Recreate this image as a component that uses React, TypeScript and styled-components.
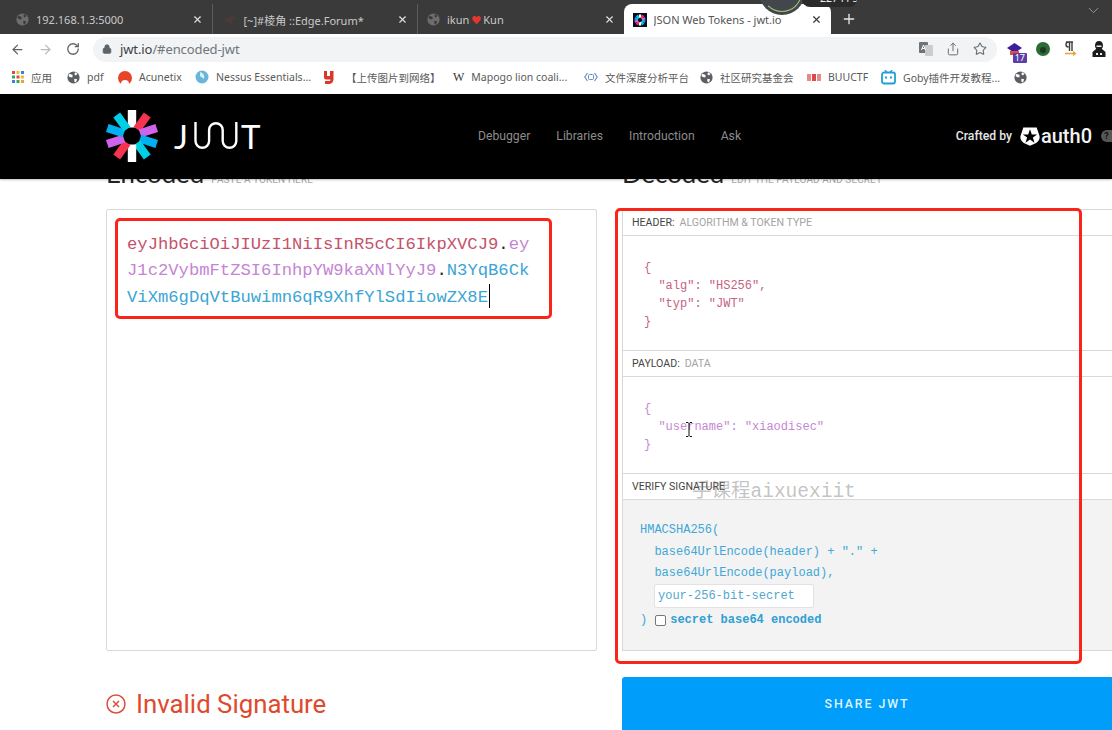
import React from 'react';
import styled, { createGlobalStyle } from 'styled-components';
import { ArrowLeft, ArrowRight, RotateCw, Lock, Star, Share, Plus, X, ChevronDown } from 'lucide-react';

const Global = createGlobalStyle`
  html, body { margin: 0; padding: 0; background: #fff; }
  #root { width: 1112px; height: 730px; }
`;

const UI = `"Noto Sans", "Noto Sans CJK SC", sans-serif`;
const MONO = `"Liberation Mono", "DejaVu Sans Mono", monospace`;
const SITE = `Roboto, "Liberation Sans", sans-serif`;

const Page = styled.div`
  position: relative;
  width: 1112px;
  height: 730px;
  overflow: hidden;
  background: #fff;
  font-family: ${SITE};
`;

/* ---------- browser chrome ---------- */
const TabStrip = styled.div`
  position: relative;
  height: 34px;
  background: #3a3a3a;
  display: flex;
  align-items: flex-end;
  padding-left: 7px;
`;
const Tab = styled.div<{ $active?: boolean; $sep?: boolean }>`
  width: ${p => (p.$active ? 207 : 205.5)}px;
  box-sizing: border-box;
  height: 30px;
  display: flex;
  align-items: center;
  gap: 7px;
  padding: 1px 9px 0;
  font: 11px ${UI};
  color: ${p => (p.$active ? '#555' : '#c9c9c9')};
  background: ${p => (p.$active ? '#fff' : 'transparent')};
  border-radius: ${p => (p.$active ? '8px 8px 0 0' : '0')};
  border-right: ${p => (p.$sep ? '1px solid #5c5c5c' : '0')};
  background-clip: padding-box;
  svg { flex: none; }
`;
const TabTitle = styled.span`
  flex: 1;
  white-space: nowrap;
  overflow: hidden;
`;
const Heart = styled.span`
  color: #e5362f;
  font-size: 10px;
  margin: 0 2px;
`;
const NewTab = styled.div`
  width: 36px;
  height: 30px;
  display: flex;
  align-items: center;
  justify-content: center;
  color: #e8e8e8;
`;
const StripEnd = styled.div`
  position: absolute;
  right: 10px;
  top: 2px;
  color: #9a9a9a;
`;
const Gauge = styled.div`
  position: absolute;
  left: 759px;
  top: -31px;
  width: 46px;
  height: 46px;
  border-radius: 50%;
  background: #41474a;
  overflow: hidden;
`;
const GaugeArc = styled.div`
  position: absolute;
  inset: 3px;
  border-radius: 50%;
  border: 1px solid transparent;
  border-right-color: #a7c47a;
  border-bottom-color: #a7c47a;
`;
const FpsPill = styled.div`
  position: absolute;
  left: 802px;
  top: -8px;
  width: 55px;
  height: 15px;
  box-sizing: border-box;
  padding-left: 18px;
  border-radius: 0 0 8px 8px;
  background: #2b2b2b;
  color: #eee;
  font: 10.5px ${UI};
  line-height: 13px;
  white-space: nowrap;
  overflow: hidden;
`;

const AddressRow = styled.div`
  height: 30px;
  background: #fff;
  display: flex;
  align-items: center;
  padding-left: 4px;
  color: #5f6368;
`;
const NavBtn = styled.div<{ $dim?: boolean }>`
  width: 27.5px;
  display: flex;
  justify-content: center;
  color: ${p => (p.$dim ? '#b9bcc0' : '#5f6368')};
`;
const Omnibox = styled.div`
  width: 904px;
  margin-left: 6.5px;
  height: 25px;
  border-radius: 13px;
  background: #f1f3f4;
  display: flex;
  align-items: center;
  padding: 0 10px 0 9px;
  box-sizing: border-box;
`;
const Url = styled.span`
  flex: 1;
  margin-left: 8px;
  font: 13px ${UI};
  color: #3c4043;
  letter-spacing: -0.1px;
`;
const UrlRest = styled.span`
  color: #70757a;
`;
const OmniIcons = styled.div`
  display: flex;
  gap: 13px;
  align-items: center;
  color: #6a6e73;
`;
const Extensions = styled.div`
  display: flex;
  align-items: center;
  gap: 13px;
  margin-left: 10px;
`;
const Ext = styled.div`
  position: relative;
  width: 15px;
  height: 18px;
  display: flex;
  align-items: center;
  justify-content: center;
`;
const Badge = styled.span`
  position: absolute;
  right: -5px;
  bottom: -5px;
  background: #5b3ea8;
  color: #fff;
  font: 9px/10px ${UI};
  padding: 0 2px;
  border-radius: 1px;
`;

const Bookmarks = styled.div`
  height: 26px;
  margin-bottom: 4px;
  background: #fff;
  display: flex;
  align-items: center;
  padding-left: 12px;
`;
const Mark = styled.div<{ $w: number; $gap?: number }>`
  width: ${p => p.$w}px;
  flex: none;
  display: flex;
  align-items: center;
  gap: ${p => p.$gap ?? 7}px;
  font: 10.5px ${UI};
  color: #5a5a5a;
  white-space: nowrap;
  svg { flex: none; }
`;
const WikiGlyph = styled.span`
  font: 12px "Liberation Serif", serif;
  color: #333;
`;

/* ---------- jwt.io nav ---------- */
const SiteNav = styled.nav`
  position: relative;
  z-index: 2;
  height: 85px;
  box-sizing: border-box;
  padding: 0 0 2px 106px;
  background: #000;
  box-shadow: 0 1px 2px rgba(0,0,0,.25);
  display: flex;
  align-items: center;
`;
const Logo = styled.div`
  display: flex;
  align-items: center;
  width: 372px;
  color: #fff;
`;
const Wordmark = styled.div`
  display: flex;
  align-items: center;
  margin-left: 16px;
  font: 400 33px Lato, sans-serif;
  color: #fff;
  line-height: 36px;
`;
const WaveMark = styled.svg`
  margin: 0 3px 0 6px;
`;
const Links = styled.div`
  display: flex;
  gap: 26px;
  flex: 1;
  font: 12.2px ${SITE};
  color: #8c8c8c;
`;
const Crafted = styled.div`
  display: flex;
  align-items: center;
  color: #e6e6e6;
  font: 500 12.2px ${SITE};
`;
const CraftedBy = styled.span`
  margin-right: 8px;
`;
const AuthWord = styled.span`
  font: 500 20px ${SITE};
  color: #f2f2f2;
  margin: 0 9px 0 1px;
`;
const Help = styled.span`
  width: 11px;
  height: 12px;
  border-radius: 6px 0 0 6px;
  background: #575757;
  color: #111;
  font: 700 9px/12px ${SITE};
  text-align: center;
`;

/* ---------- content ---------- */
const Columns = styled.main`
  display: grid;
  grid-template-columns: 491px 490px;
  column-gap: 25px;
  padding-left: 106px;
  margin-top: -26px;
`;
const Column = styled.section`
  display: flex;
  flex-direction: column;
`;
const Heading = styled.div`
  height: 56px;
  display: flex;
  align-items: baseline;
  gap: 7px;
`;
const Title = styled.h2`
  margin: 0;
  font: 400 25.8px/40px Lato, sans-serif;
  color: #222;
`;
const Sub = styled.span`
  font: 10px ${SITE};
  color: #a8a8a8;
  letter-spacing: 0.1px;
`;
const EncodedBox = styled.div`
  height: 442px;
  box-sizing: border-box;
  border: 1px solid #d9d9d9;
  border-radius: 2px;
  padding: 22px 20px;
  font: 17.2px/26px ${MONO};
`;
const TokenLine = styled.div`
  white-space: pre;
`;
const TokenPart = styled.span<{ $c: string }>`
  color: ${p => p.$c};
`;
const Caret = styled.span`
  display: inline-block;
  width: 1px;
  height: 24px;
  background: #000;
  vertical-align: -6px;
  margin-left: 1px;
`;
const Status = styled.div`
  margin-top: 39px;
  display: flex;
  align-items: center;
  gap: 10px;
  font: 400 25.8px/28px Roboto, sans-serif;
  color: #e04a2c;
  svg { flex: none; }
`;
const DecodedBox = styled.div`
  height: 442px;
  box-sizing: border-box;
  border-left: 1px solid #d9d9d9;
  border-top: 1px solid #d9d9d9;
  display: flex;
  flex-direction: column;
`;
const SectionLabel = styled.div`
  height: 26px;
  box-sizing: border-box;
  border-bottom: 1px solid #d9d9d9;
  display: flex;
  align-items: center;
  gap: 5px;
  padding-left: 9px;
  font: 10.6px ${SITE};
  color: #444;
  flex: none;
`;
const SectionHint = styled.span`
  color: #a3a3a3;
`;
const JsonBody = styled.div<{ $h: number; $c: string }>`
  height: ${p => p.$h}px;
  box-sizing: border-box;
  padding: 23px 0 0 21px;
  border-bottom: 1px solid #d9d9d9;
  font: 12px/18px ${MONO};
  color: ${p => p.$c};
  white-space: pre;
  flex: none;
`;
const VerifyBody = styled.div`
  flex: 1;
  background: #f3f3f3;
  border-bottom: 1px solid #d9d9d9;
  padding: 20px 0 0 17px;
  font: 12px/21.5px ${MONO};
  color: #41a7d7;
  white-space: pre;
`;
const SecretRow = styled.div`
  margin: -1px 0 0 14px;
  height: 24px;
  width: 160px;
  box-sizing: border-box;
  border: 1px solid #e2e2e2;
  border-radius: 2px;
  background: #fff;
  padding-left: 3px;
  line-height: 22px;
  color: #52a8ce;
`;
const Encoded64 = styled.div`
  display: flex;
  align-items: center;
  margin-top: 2px;
  height: 22px;
`;
const Check = styled.span`
  width: 9px;
  height: 9px;
  margin: 0 4px 0 8px;
  border: 1px solid #777;
  border-radius: 2px;
  background: #fff;
`;
const Bold = styled.span`
  font-weight: 700;
  color: #2f9fd4;
`;
const ShareBtn = styled.button`
  margin-top: 26px;
  height: 60px;
  flex: none;
  border: 0;
  border-radius: 3px 0 0 3px;
  background: #019dfb;
  color: #dff3ff;
  font: 500 12.4px ${SITE};
  letter-spacing: 1.9px;
  padding: 0 0 8px;
`;

/* ---------- annotations laid over the page ---------- */
const RedBox = styled.div<{ $l: number; $t: number; $w: number; $h: number }>`
  position: absolute;
  left: ${p => p.$l}px;
  top: ${p => p.$t}px;
  width: ${p => p.$w}px;
  height: ${p => p.$h}px;
  box-sizing: border-box;
  border: 3.5px solid #fb2419;
  border-radius: 5px;
  z-index: 3;
`;
const Watermark = styled.div`
  position: absolute;
  left: 692px;
  top: 479px;
  font: 19.5px/26px "Liberation Mono", "Noto Sans CJK SC", monospace;
  color: rgba(110,110,110,.42);
  z-index: 3;
  white-space: nowrap;
`;
const Cursor = styled.svg`
  position: absolute;
  left: 685px;
  top: 422px;
  z-index: 3;
`;

const GlobeFav = ({ c = '#6d6d6d', bg = '#3a3a3a', s = 13 }: { c?: string; bg?: string; s?: number }) => (
  <svg width={s} height={s} viewBox="0 0 16 16">
    <circle cx="8" cy="8" r="7.5" fill={c} />
    <path d="M3 3.5 7 5 6.5 8 3.5 7.5 1.8 6zM9 9.5l3.5.5-1.5 4-2-1zM10 1.5l3 2-2 2-2-1.5z" fill={bg} />
  </svg>
);

const BurstLogo = () => {
  const colors = ['#fff', '#f5344f', '#d063ee', '#00b0f0', '#00cfe6'];
  return (
    <svg width="52" height="52" viewBox="-26 -26 52 52">
      {Array.from({ length: 10 }).map((_, i) => (
        <rect key={i} x="-4.2" y="-26" width="8.4" height="17.5" fill={colors[i % 5]} transform={`rotate(${i * 36})`} />
      ))}
    </svg>
  );
};

const AuthBadge = () => (
  <svg width="20" height="20" viewBox="0 0 21 21">
    <path fillRule="evenodd" fill="#fff" d="M3.5 1.5h14l3 9c.6 3.5-1 5.500-3.500 7.300L10.500 20.800 4 17.800C1.500 16 -.1 14 .5 10.500zM10.500 3.500l-1.900 5.400H3l4.500 3.300-1.700 5.400 4.700-3.400 4.700 3.400-1.700-5.400L18 8.900h-5.600z" />
  </svg>
);

export default function App() {
  return (
    <Page>
      <Global />
      <TabStrip>
        <Tab $sep>
          <GlobeFav />
          <TabTitle>192.168.1.3:5000</TabTitle>
          <X size={11} strokeWidth={2.4} color="#e0e0e0" />
        </Tab>
        <Tab $sep>
          <svg width="15" height="15" viewBox="0 0 16 16"><path d="M1 9 8 6l3-5 1 5 3 2-4 1-1 6-3-4z" fill="#4c3a3a" /></svg>
          <TabTitle>[~]#棱角 ::Edge.Forum*</TabTitle>
          <X size={11} strokeWidth={2.4} color="#e0e0e0" />
        </Tab>
        <Tab>
          <GlobeFav />
          <TabTitle>ikun<Heart>♥</Heart>Kun</TabTitle>
          <X size={11} strokeWidth={2.4} color="#e0e0e0" />
        </Tab>
        <Tab $active>
          <svg width="14" height="14" viewBox="-14 -14 28 28">
            <rect x="-14" y="-14" width="28" height="28" fill="#0a0a1e" />
            {['#fff', '#f5344f', '#d063ee', '#00b0f0', '#00cfe6', '#fff', '#f5344f', '#d063ee', '#00b0f0', '#00cfe6'].map((c, i) => (
              <rect key={i} x="-2.400" y="-11" width="4.800" height="7" fill={c} transform={`rotate(${i * 36})`} />
            ))}
          </svg>
          <TabTitle>JSON Web Tokens - jwt.io</TabTitle>
          <X size={11} strokeWidth={2.6} color="#3c4043" />
        </Tab>
        <NewTab><Plus size={16} strokeWidth={2} /></NewTab>
        <StripEnd><ChevronDown size={17} strokeWidth={1.4} /></StripEnd>
      </TabStrip>
      <Gauge><GaugeArc /></Gauge>
      <FpsPill>227 FPS</FpsPill>

      <AddressRow>
        <NavBtn><ArrowLeft size={15} strokeWidth={2} /></NavBtn>
        <NavBtn $dim><ArrowRight size={15} strokeWidth={2} /></NavBtn>
        <NavBtn><RotateCw size={14} strokeWidth={2.2} /></NavBtn>
        <Omnibox>
          <Lock size={10} fill="#5f6368" color="#5f6368" strokeWidth={2.4} />
          <Url>jwt.io<UrlRest>/#encoded-jwt</UrlRest></Url>
          <OmniIcons>
            <svg width="14" height="14" viewBox="0 0 14 14">
              <rect x="0" y="0" width="9" height="11" rx="1" fill="#6f7377" />
              <rect x="6" y="3" width="8" height="11" rx="1" fill="#c9cdd0" />
              <path d="M2.500 8 4.500 3l2 5M3.300 6.500h2.400" stroke="#fff" strokeWidth="1" fill="none" />
            </svg>
            <Share size={14} strokeWidth={1.7} />
            <Star size={14} strokeWidth={1.9} />
          </OmniIcons>
        </Omnibox>
        <Extensions>
          <Ext>
            <svg width="15" height="13" viewBox="0 0 15 13"><path d="M7.500 0 15 5l-7.500 5L0 5z" fill="#3b1f9e" /><path d="M3 8h9v4H3z" fill="#e74b3c" /></svg>
            <Badge>17</Badge>
          </Ext>
          <Ext>
            <svg width="14" height="14" viewBox="0 0 14 14"><circle cx="7" cy="7" r="7" fill="#2c6b34" /><circle cx="7" cy="8" r="3" fill="#1b3a22" /></svg>
          </Ext>
          <Ext>
            <svg width="15" height="16" viewBox="0 0 15 16">
              <path d="M3 1h7M5.500 1a2.500 2.500 0 0 0 0 5M6.500 1v9M9 1v9" stroke="#3c3c3c" strokeWidth="1.4" fill="none" />
              <path d="M2 12.500h10M10 10.500l2.500 2-2.500 2" stroke="#e8a33c" strokeWidth="1.3" fill="none" />
            </svg>
          </Ext>
          <Ext>
            <svg width="14" height="16" viewBox="0 0 14 16">
              <path d="M7 0c2.500 0 4 1.800 4 4.500 0 1.400-.5 2.500-1.300 3.300L13.500 11v5H.5v-5l3.800-3.200C3.500 7 3 5.900 3 4.500 3 1.800 4.500 0 7 0z" fill="#1c1c1c" />
              <path d="M4.500 4.500h5v1.500h-5zM4 12h2v2H4zM8 12h2v2H8z" fill="#eee" />
            </svg>
          </Ext>
        </Extensions>
      </AddressRow>

      <Bookmarks>
        <Mark $w={55}>
          <svg width="12" height="12" viewBox="0 0 12 12">
            {[0, 1, 2].flatMap(r => [0, 1, 2].map(c => (
              <rect key={`${r}${c}`} x={c * 4.500} y={r * 4.500} width="3" height="3" fill={['#e8453c', '#f9bb2d', '#3a7ee8', '#34a853', '#e8453c', '#f9bb2d', '#3a7ee8', '#34a853', '#e8a33c'][r * 3 + c]} />
            )))}
          </svg>
          <span>应用</span>
        </Mark>
        <Mark $w={51}><GlobeFav c="#5b5e62" bg="#fff" /><span>pdf</span></Mark>
        <Mark $w={77}>
          <svg width="14" height="13" viewBox="0 0 14 13"><circle cx="7" cy="7" r="7" fill="#e8442a" /><path d="M3 13a4 4 0 0 1 8 0z" fill="#fff" /></svg>
          <span>Acunetix</span>
        </Mark>
        <Mark $w={128}>
          <svg width="14" height="14" viewBox="0 0 14 14"><circle cx="7" cy="7" r="6.500" fill="#6bb5d8" /><path d="M5 2c3 1 5 3 4 7l-4-3z" fill="#dbeef6" /></svg>
          <span>Nessus Essentials...</span>
        </Mark>
        <Mark $w={130} $gap={12}>
          <svg width="11" height="13" viewBox="0 0 11 13"><path d="M1 0h3v5h3V0h3.500v8c0 3-2 5-5 5H2v-3h4c1 0 1.500-.5 1.500-1.500H3C1.500 8.500 1 7.500 1 6z" fill="#d9372c" /></svg>
          <span>【上传图片到网络】</span>
        </Mark>
        <Mark $w={131}>
          <WikiGlyph>W</WikiGlyph>
          <span>Mapogo lion coali...</span>
        </Mark>
        <Mark $w={116}>
          <svg width="14" height="10" viewBox="0 0 14 10"><path d="M3.500 1 .8 5l2.700 4M10.500 1l2.700 4-2.700 4" stroke="#6a8fc0" strokeWidth="1.200" fill="none" /><rect x="4.500" y="2.500" width="5" height="5" rx="1" stroke="#6a8fc0" fill="none" /></svg>
          <span>文件深度分析平台</span>
        </Mark>
        <Mark $w={107}><GlobeFav c="#5b5e62" bg="#fff" /><span>社区研究基金会</span></Mark>
        <Mark $w={74}>
          <svg width="14" height="9" viewBox="0 0 14 9"><rect x="0" y="1" width="4" height="7" fill="#e78a8a" /><rect x="5" y="1" width="4" height="7" fill="#d94a4a" /><rect x="10" y="1" width="4" height="7" fill="#e78a8a" /></svg>
          <span>BUUCTF</span>
        </Mark>
        <Mark $w={133}>
          <svg width="15" height="15" viewBox="0 0 15 15">
            <path d="M4 0l2 2.500M11 0 9 2.500" stroke="#1e9fd6" strokeWidth="1.300" />
            <rect x="1" y="2.500" width="13" height="11" rx="2" fill="none" stroke="#1e9fd6" strokeWidth="1.800" />
            <rect x="4" y="6.500" width="2" height="2" fill="#1e9fd6" /><rect x="9" y="6.500" width="2" height="2" fill="#1e9fd6" />
          </svg>
          <span>Goby插件开发教程...</span>
        </Mark>
        <Mark $w={14}><GlobeFav c="#5b5e62" bg="#fff" /></Mark>
      </Bookmarks>

      <SiteNav>
        <Logo>
          <BurstLogo />
          <Wordmark>
            <span>J</span>
            <WaveMark width="44" height="27" viewBox="0 0 44 27">
              <path d="M1.500 0V19a6.800 6.800 0 0 0 13.600 0V8a6.800 6.800 0 0 1 13.600 0V19a6.800 6.800 0 0 0 13.600 0V0" fill="none" stroke="#fff" strokeWidth="2.400" />
            </WaveMark>
            <span>T</span>
          </Wordmark>
        </Logo>
        <Links>
          <span>Debugger</span>
          <span>Libraries</span>
          <span>Introduction</span>
          <span>Ask</span>
        </Links>
        <Crafted>
          <CraftedBy>Crafted by</CraftedBy>
          <AuthBadge />
          <AuthWord>auth0</AuthWord>
          <Help>?</Help>
        </Crafted>
      </SiteNav>

      <Columns>
        <Column>
          <Heading>
            <Title>Encoded</Title>
            <Sub>PASTE A TOKEN HERE</Sub>
          </Heading>
          <EncodedBox>
            <TokenLine>
              <TokenPart $c="#c5526a">eyJhbGciOiJIUzI1NiIsInR5cCI6IkpXVCJ9</TokenPart>
              <TokenPart $c="#222">.</TokenPart>
              <TokenPart $c="#c585d4">ey</TokenPart>
            </TokenLine>
            <TokenLine>
              <TokenPart $c="#c585d4">J1c2VybmFtZSI6InhpYW9kaXNlYyJ9</TokenPart>
              <TokenPart $c="#222">.</TokenPart>
              <TokenPart $c="#3ba5d4">N3YqB6Ck</TokenPart>
            </TokenLine>
            <TokenLine>
              <TokenPart $c="#3ba5d4">ViXm6gDqVtBuwimn6qR9XhfYlSdIiowZX8E</TokenPart>
              <Caret />
            </TokenLine>
          </EncodedBox>
          <Status>
            <svg width="20" height="20" viewBox="0 0 20 20">
              <circle cx="10" cy="10" r="9" fill="none" stroke="#d9503a" strokeWidth="1.500" />
              <path d="M7 7l6 6M13 7l-6 6" stroke="#d9503a" strokeWidth="1.500" />
            </svg>
            <span>Invalid Signature</span>
          </Status>
        </Column>
        <Column>
          <Heading>
            <Title>Decoded</Title>
            <Sub>EDIT THE PAYLOAD AND SECRET</Sub>
          </Heading>
          <DecodedBox>
            <SectionLabel>HEADER: <SectionHint>ALGORITHM &amp; TOKEN TYPE</SectionHint></SectionLabel>
            <JsonBody $h={115} $c="#c5637f">{`{\n  "alg": "HS256",\n  "typ": "JWT"\n}`}</JsonBody>
            <SectionLabel>PAYLOAD: <SectionHint>DATA</SectionHint></SectionLabel>
            <JsonBody $h={97} $c="#c587d4">{`{\n  "username": "xiaodisec"\n}`}</JsonBody>
            <SectionLabel>VERIFY SIGNATURE</SectionLabel>
            <VerifyBody>
              <div>HMACSHA256(</div>
              <div>{'  base64UrlEncode(header) + "." +'}</div>
              <div>{'  base64UrlEncode(payload),'}</div>
              <SecretRow>your-256-bit-secret</SecretRow>
              <Encoded64>
                <span>)</span>
                <Check />
                <Bold>secret base64 encoded</Bold>
              </Encoded64>
            </VerifyBody>
          </DecodedBox>
          <ShareBtn>SHARE JWT</ShareBtn>
        </Column>
      </Columns>

      <RedBox $l={115} $t={218} $w={437} $h={101} />
      <RedBox $l={615} $t={208} $w={467} $h={456} />
      <Watermark>手课程aixuexiit</Watermark>
      <Cursor width="8" height="15" viewBox="0 0 8 15">
        <path d="M1 .5h2L4 1.500 5 .5h2M4 1.500v12M1 14.500h2l1-1 1 1h2" fill="none" stroke="#111" strokeWidth="1" />
      </Cursor>
    </Page>
  );
}
